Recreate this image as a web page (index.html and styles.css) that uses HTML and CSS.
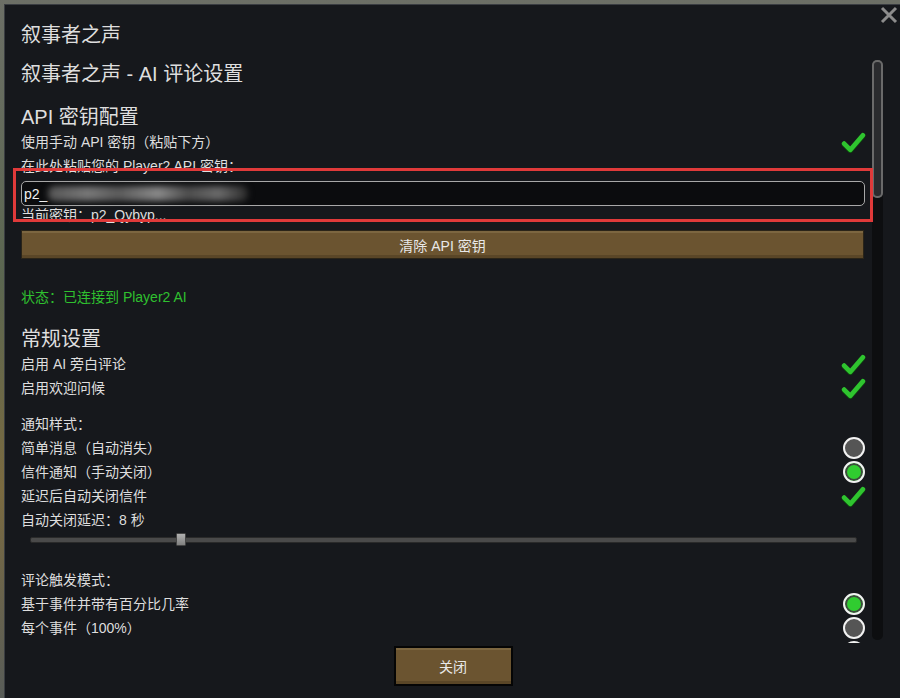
FILE: index.html
```html
<!DOCTYPE html>
<html lang="zh-CN">
<head>
    <meta charset="UTF-8">
    <meta name="viewport" content="width=device-width, initial-scale=1.0">
    <title>叙事者之声 - AI 评论设置</title>
    <link rel="stylesheet" href="styles.css">
</head>
<body>
    <div class="window">
        <div class="title">叙事者之声</div>

        <div class="scroll">
            <div class="content">
                <div class="subtitle">叙事者之声 - AI 评论设置</div>

                <div class="heading">API 密钥配置</div>
                <div class="row">
                    <span>使用手动 API 密钥（粘贴下方）</span>
                    <svg class="check" viewBox="0 0 24 20"><polyline points="3,11 9,17 21,3"/></svg>
                </div>
                <div class="row">在此处粘贴您的 Player2 API 密钥：</div>
                <div class="key-input">
                    <span>p2_</span>
                    <span class="blur"></span>
                </div>
                <div class="current-key">当前密钥：p2_Qybyp...</div>
                <button class="btn-wide">清除 API 密钥</button>

                <div class="status">状态：已连接到 Player2 AI</div>

                <div class="heading">常规设置</div>
                <div class="row">
                    <span>启用 AI 旁白评论</span>
                    <svg class="check" viewBox="0 0 24 20"><polyline points="3,11 9,17 21,3"/></svg>
                </div>
                <div class="row">
                    <span>启用欢迎问候</span>
                    <svg class="check" viewBox="0 0 24 20"><polyline points="3,11 9,17 21,3"/></svg>
                </div>

                <div class="row section">通知样式：</div>
                <div class="row">
                    <span>简单消息（自动消失）</span>
                    <span class="radio"></span>
                </div>
                <div class="row">
                    <span>信件通知（手动关闭）</span>
                    <span class="radio on"></span>
                </div>
                <div class="row">
                    <span>延迟后自动关闭信件</span>
                    <svg class="check" viewBox="0 0 24 20"><polyline points="3,11 9,17 21,3"/></svg>
                </div>
                <div class="row">自动关闭延迟：8 秒</div>
                <div class="slider">
                    <div class="track"><span class="thumb"></span></div>
                </div>

                <div class="row section2">评论触发模式：</div>
                <div class="row">
                    <span>基于事件并带有百分比几率</span>
                    <span class="radio on"></span>
                </div>
                <div class="row">
                    <span>每个事件（100%）</span>
                    <span class="radio"></span>
                </div>
                <div class="row">
                    <span></span>
                    <span class="radio"></span>
                </div>
            </div>
            <div class="scrollbar"><div class="scroll-thumb"></div></div>
        </div>

        <div class="footer">
            <button class="btn-close">关闭</button>
        </div>

        <svg class="close-x" viewBox="0 0 20 20"><path d="M3 3 L17 17 M17 3 L3 17"/></svg>
    </div>

    <div class="highlight"></div>
</body>
</html>
```

FILE: styles.css
```css
body {
    margin: 0;
    background: linear-gradient(#6c6f66, #5b6650 40%, #7a6a40 70%, #585c58);
    font-family: "Liberation Sans", "Noto Sans CJK SC", sans-serif;
    color: #dedede;
    height: 698px;
    overflow: hidden;
}
.window {
    position: relative;
    margin: 4px 0 0 4px;
    height: 694px;
    background: #16181c;
    border-left: 1px solid #3a3d42;
    border-top: 1px solid #3a3d42;
    box-sizing: border-box;
    padding: 17px 0 0 16px;
}
.title {
    font-size: 20px;
    line-height: 26px;
}
.scroll {
    display: flex;
    gap: 7px;
    margin-top: 12px;
    height: 583px;
    overflow: hidden;
}
.content {
    width: 844px;
    flex: none;
}
.subtitle {
    font-size: 20px;
    line-height: 26px;
    margin-top: 1px;
}
.heading {
    font-size: 20px;
    line-height: 26px;
    margin-top: 17px;
}
.row {
    display: flex;
    justify-content: space-between;
    align-items: center;
    font-size: 14px;
    line-height: 24px;
    height: 24px;
}
.check {
    width: 25px;
    height: 21px;
    margin-right: -1px;
}
.check polyline {
    fill: none;
    stroke: #2fc42f;
    stroke-width: 4.5;
    stroke-linecap: round;
    stroke-linejoin: round;
    filter: drop-shadow(0 1px 0 #0c4a0c);
}
.radio {
    width: 18px;
    height: 18px;
    border: 2px solid #f2f2f2;
    border-radius: 50%;
    background: #555;
}
.radio.on {
    background: #30cc30;
    box-shadow: inset 0 0 0 2px #3d4a3d;
}
.key-input {
    display: flex;
    align-items: center;
    margin-top: 3px;
    height: 25px;
    box-sizing: border-box;
    border: 1px solid #a8a8a8;
    border-radius: 5px;
    background: #0b0c0e;
    padding-left: 2px;
    font-size: 14px;
    color: #f0f0f0;
}
.blur {
    display: inline-block;
    width: 200px;
    height: 15px;
    margin-left: 1px;
    background: linear-gradient(90deg, #555 0, #777 20%, #5a5a5a 35%, #888 55%, #4c4c4c 70%, #6a6a6a 85%, #2a2a2a 100%);
    filter: blur(3px);
    border-radius: 6px;
}
.current-key {
    font-size: 14px;
    line-height: 18px;
}
.btn-wide {
    display: block;
    width: 843px;
    height: 29px;
    margin-top: 6px;
    border: 1px solid #2a2418;
    background: #6b5430;
    box-shadow: inset 0 2px 0 #7c6640, inset 0 -3px 0 #5a4627;
    color: #e8e8e8;
    font-family: inherit;
    font-size: 14px;
}
.status {
    font-size: 14px;
    line-height: 24px;
    color: #2fc02f;
    margin-top: 26px;
}
.section {
    margin-top: 12px;
}
.section2 {
    margin-top: 20px;
}
.slider {
    height: 16px;
    padding: 0 8px 0 9px;
    display: flex;
    align-items: center;
}
.track {
    position: relative;
    flex: 1;
    height: 4px;
    background: #4a4a4a;
    border: 1px solid #2a2a2a;
    border-radius: 2px;
}
.thumb {
    position: absolute;
    left: 145px;
    top: -5px;
    width: 8px;
    height: 11px;
    background: linear-gradient(#b0b0b0, #808080);
    border: 1px solid #444;
    border-radius: 1px;
}
.scrollbar {
    width: 11px;
    height: 580px;
    background: #0d0e10;
    border-radius: 5px;
}
.scroll-thumb {
    height: 138px;
    border-radius: 5px;
    background: #2a2b2e;
    box-shadow: inset 0 0 0 2px #6a6a6a;
}
.footer {
    display: flex;
    justify-content: center;
    padding-right: 15px;
    margin-top: 3px;
}
.btn-close {
    width: 119px;
    height: 40px;
    border: 2px solid #050505;
    background: #6b5430;
    box-shadow: inset 0 2px 0 #7c6640, inset 0 -3px 0 #5a4627;
    color: #e8e8e8;
    font-family: inherit;
    font-size: 14px;
}
.close-x {
    position: absolute;
    right: 1px;
    top: 0;
    width: 20px;
    height: 20px;
}
.close-x path {
    stroke: #8c8c8c;
    stroke-width: 3;
}
.highlight {
    position: absolute;
    left: 13px;
    top: 168px;
    width: 860px;
    height: 54px;
    box-sizing: border-box;
    border: 3px solid #e03a3a;
}
```
